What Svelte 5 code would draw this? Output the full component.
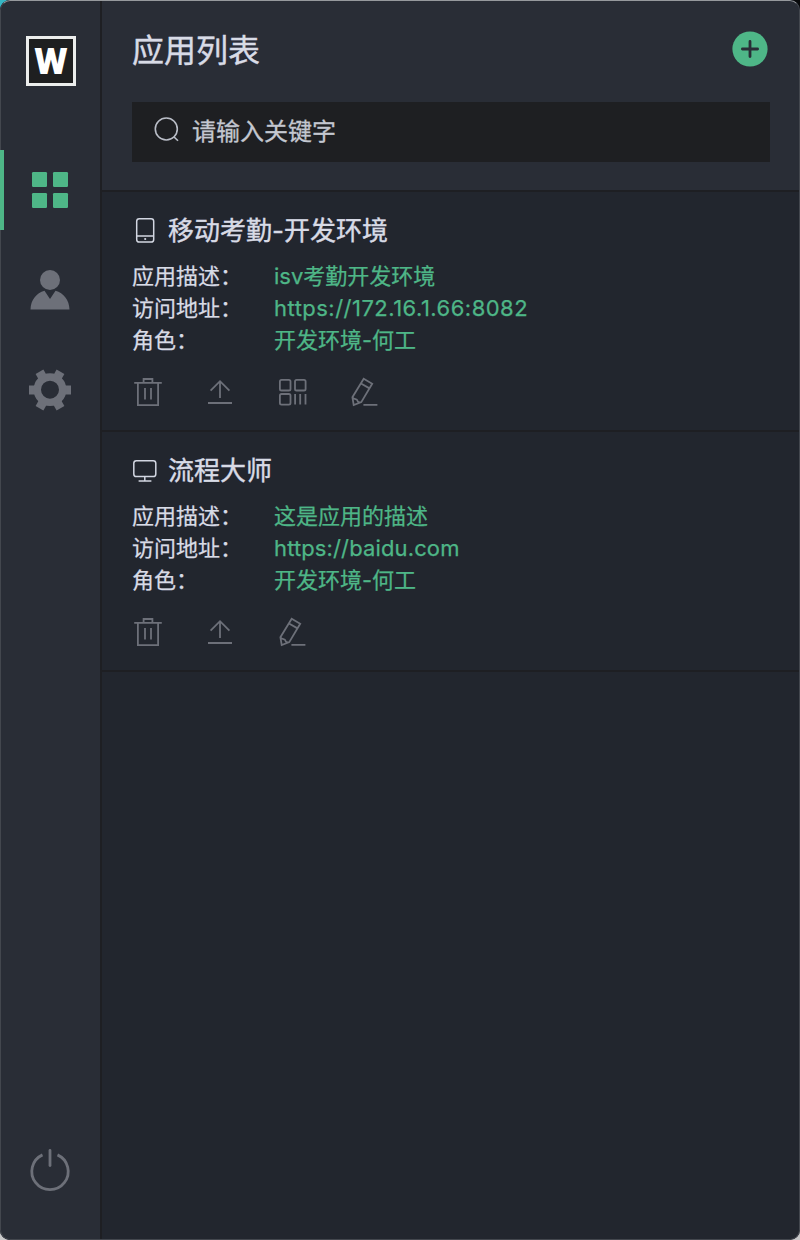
<script>
  const apps = [
    {
      name: '移动考勤-开发环境',
      device: 'phone',
      rows: [
        ['应用描述：', 'isv考勤开发环境', ''],
        ['访问地址：', 'https://172.16.1.66:8082', 'numeric'],
        ['角色：', '开发环境-何工', ''],
      ],
      actions: ['trash', 'upload', 'qr', 'edit'],
    },
    {
      name: '流程大师',
      device: 'desktop',
      rows: [
        ['应用描述：', '这是应用的描述', ''],
        ['访问地址：', 'https://baidu.com', 'domain'],
        ['角色：', '开发环境-何工', ''],
      ],
      actions: ['trash', 'upload', 'edit'],
    },
  ];
  const teeth = [0, 60, 120, 180, 240, 300];
</script>

<div class="backdrop">
  <div class="window">
    <aside>
      <div class="logo">
        <svg width="44" height="44" viewBox="0 0 44 44">
          <text x="5.3" y="35" textLength="33.4" lengthAdjust="spacingAndGlyphs">W</text>
        </svg>
      </div>
      <nav>
        <button class="active" aria-label="apps">
          <svg width="48" height="48" viewBox="0 0 48 48" fill="#4eb687">
            <rect x="6" y="6" width="15" height="15" rx="1.3" />
            <rect x="27" y="6" width="15" height="15" rx="1.3" />
            <rect x="6" y="27" width="15" height="15" rx="1.3" />
            <rect x="27" y="27" width="15" height="15" rx="1.3" />
          </svg>
        </button>
        <button aria-label="user">
          <svg width="48" height="48" viewBox="0 0 48 48" fill="#6d7079">
            <circle cx="24" cy="14" r="10" />
            <path d="M4.5 43.5C4.8 34 10.3 27.2 18.5 24.8L24 33l5.500-8.200C37.700 27.200 43.200 34 43.500 43.500Z" />
          </svg>
        </button>
        <button aria-label="settings">
          <svg width="48" height="48" viewBox="0 0 48 48">
            <g fill="#6d7079">
              {#each teeth as angle}
                <rect x="38" y="19.500" width="7" height="9" transform="rotate({angle} 24 24)" />
              {/each}
            </g>
            <circle cx="24" cy="23.700" r="12.700" fill="none" stroke="#6d7079" stroke-width="7.400" />
          </svg>
        </button>
      </nav>
      <button class="power" aria-label="power">
        <svg width="48" height="48" viewBox="0 0 48 48" fill="none" stroke="#6d7079" stroke-width="2.800">
          <path d="M16.500 8.900A18.200 18.200 0 1 0 31.500 8.900" />
          <path d="M24 4.500V19.500" stroke-linecap="round" />
        </svg>
      </button>
    </aside>

    <main>
      <header>
        <div class="heading">
          <h1>应用列表</h1>
          <button class="add" aria-label="add">
            <svg width="36" height="36" viewBox="0 0 36 36">
              <circle cx="18" cy="18" r="17.600" fill="#4eb687" />
              <path d="M10.400 18H25.600M18 10.400V25.600" stroke="#292d36" stroke-width="2.800" stroke-linecap="round" />
            </svg>
          </button>
        </div>
        <div class="search">
          <svg width="28" height="28" viewBox="0 0 28 28" fill="none" stroke="#b9bdc7" stroke-width="1.600">
            <circle cx="14.300" cy="14" r="11" />
            <path d="M21.800 21.700L26 25.800" />
          </svg>
          <span>请输入关键字</span>
        </div>
      </header>

      {#each apps as app}
        <section>
          <h2>
            <svg width="26" height="28" viewBox="0 0 26 28" fill="none" stroke="#d3d7e2" stroke-width="1.500">
              {#if app.device === 'phone'}
                <rect x="4.700" y="1.700" width="17" height="23.400" rx="2.600" />
                <path d="M4.700 18.900H21.700" />
                <circle cx="13.200" cy="22" r="1.100" fill="#d3d7e2" stroke="none" />
              {:else}
                <rect x="1.800" y="3.700" width="22" height="15.800" rx="2.600" />
                <path d="M12.800 19.500V24M6.600 24H19.400" />
              {/if}
            </svg>
            <span>{app.name}</span>
          </h2>
          <dl>
            {#each app.rows as [label, value, kind]}
              <div class="row"><dt>{label}</dt><dd class={kind}>{value}</dd></div>
            {/each}
          </dl>
          <div class="actions">
            {#each app.actions as action}
              <svg width="32" height="32" viewBox="0 0 32 32" fill="none" stroke="#6d7079" stroke-width="1.800">
                {#if action === 'trash'}
                  <path d="M2.200 6.900H29.800M5.900 6.900V29.200H26.100V6.900M11.600 6.900V3H20.400V6.900M13 12V23.600M19 12V23.600" />
                {:else if action === 'upload'}
                  <path d="M16 22V5.300M6.600 14.600L16 5.200L25.400 14.600M4 27H28" />
                {:else if action === 'qr'}
                  <rect x="3.900" y="3.900" width="10.600" height="10.600" rx="1.600" />
                  <rect x="19" y="3.900" width="10.600" height="10.600" rx="1.600" />
                  <rect x="3.900" y="18" width="10.600" height="10.600" rx="1.600" />
                  <path d="M19.100 18V28.500M24.200 18V28.500M29.500 18V28.500" />
                {:else}
                  <path d="M15.700 2.800L24.200 7.700L13.300 26.100L5.700 29.100L4.400 21.200ZM13 7.500L21.500 12.400M4.400 21.200C5.500 24 9 22.500 9.400 24.600C9.700 26.300 11.500 26.500 13.300 26.100M15.400 28.800H29.400" />
                {/if}
              </svg>
            {/each}
          </div>
        </section>
      {/each}
    </main>
  </div>
</div>

<style>
  :global(body) { margin: 0; }
  .backdrop {
    width: 800px;
    height: 1240px;
    background: linear-gradient(90deg, #36b6c4 0 50%, #08090b 50%) top / 100% 20px no-repeat, #c9c9ca;
  }
  .window {
    box-sizing: border-box;
    width: 800px;
    height: 1240px;
    display: flex;
    overflow: hidden;
    border-radius: 10px;
    background: #22262e;
    font-family: Inter, "Noto Sans CJK SC", sans-serif;
    color: #d8dbe6;
    position: relative;
  }
  .window::after {
    content: "";
    position: absolute;
    inset: 0;
    border: 1px solid #43474e;
    border-top-color: #96999d;
    border-radius: 10px;
    pointer-events: none;
  }
  button { padding: 0; border: 0; background: none; display: flex; align-items: center; justify-content: center; }
  svg { display: block; flex: none; }
  aside {
    box-sizing: border-box;
    width: 102px;
    flex: none;
    background: #292d36;
    border-right: 2px solid #1e1f23;
    display: flex;
    flex-direction: column;
    padding: 36px 0 20px;
  }
  .logo { width: 44px; height: 44px; border: 3px solid #eceeed; background: #1e1f20; margin-left: 26px; }
  .logo text { font: 900 36.500px Roboto, sans-serif; fill: #fff; }
  nav { display: flex; flex-direction: column; gap: 20px; margin-top: 64px; }
  nav button { box-sizing: border-box; width: 100px; height: 80px; }
  nav .active { border-left: 4px solid #4eb687; padding-right: 4px; z-index: 1; }
  .power { width: 100px; height: 100px; margin-top: auto; }
  main { flex: 1; min-width: 0; }
  header {
    box-sizing: border-box;
    height: 192px;
    background: #292d36;
    border-bottom: 2px solid #1e1f23;
    padding: 26px 30px 0;
  }
  .heading { height: 46px; display: flex; align-items: center; justify-content: space-between; padding-right: 2px; }
  h1 { font-size: 32px; line-height: 46px; font-weight: 400; margin: 4px 0 0; -webkit-text-stroke: 0.4px; }
  .search {
    height: 60px;
    margin-top: 30px;
    padding-left: 20px;
    display: flex;
    align-items: center;
    gap: 12px;
    background: #1e1f22;
    color: #c3c7d0;
    font-size: 24px;
    -webkit-text-stroke: 0.3px;
  }
  .search svg { margin-top: -6px; }
  .search span { margin-top: -5px; }
  section { box-sizing: border-box; height: 240px; padding: 20px 30px 0; border-bottom: 2px solid #1e1f23; }
  h2 { display: flex; align-items: center; gap: 10px; height: 38px; margin: 0 0 10px; font-size: 26px; line-height: 38px; font-weight: 400; -webkit-text-stroke: 0.4px; }
  dl { margin: 0; font-size: 22px; line-height: 32px; -webkit-text-stroke: 0.25px; }
  .row { display: flex; height: 32px; }
  dt { width: 142px; white-space: nowrap; }
  dd { margin: 0; color: #4eb687; }
  dd.numeric { letter-spacing: 0.48px; }
  dd.domain { letter-spacing: 0.13px; }
  .actions { display: flex; gap: 40px; margin-top: 20px; }
</style>
